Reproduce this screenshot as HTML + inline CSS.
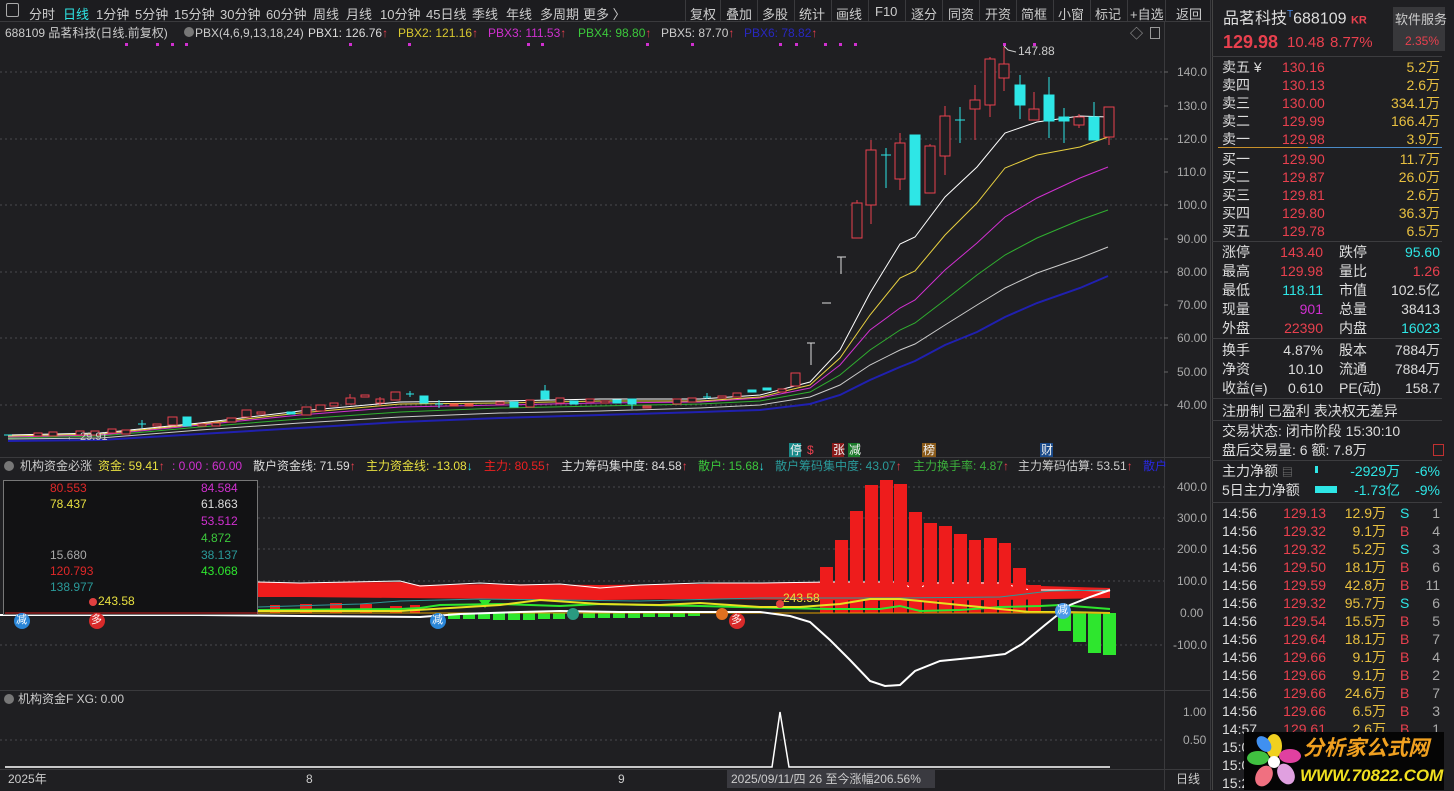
<!DOCTYPE html>
<html><head><meta charset="utf-8">
<style>
*{margin:0;padding:0;box-sizing:border-box}
body{width:1454px;height:790px;background:#1f1f22;overflow:hidden;position:relative;font-family:"Liberation Sans","Noto Sans CJK SC",sans-serif;font-size:12px;color:#ddd}
.a{position:absolute;white-space:nowrap;line-height:1}
.tb{position:absolute;top:0;left:0;width:1210px;height:22px;background:#1c1c1f;border-bottom:1px solid #3a3a3d}
.tb span{position:absolute;top:4px;font-size:13px;color:#ccc;white-space:nowrap}
.sep{position:absolute;top:0;width:1px;height:22px;background:#3a3a3d}
.r{color:#e8404e}.y{color:#e8c040}.c{color:#2ee6e6}.w{color:#ddd}.m{color:#d030d0}.g{color:#3cc83c}.gy{color:#aaa}
.rp{position:absolute;left:1212px;top:0;width:242px;height:790px;background:#1f1f22;border-left:1px solid #444}
.rp .a{font-size:14px}
.hl{position:absolute;left:1212px;width:230px;height:1px;background:#3c3c3f}
.rt{text-align:right}
</style></head><body>

<div class="tb">
<span style="left:6px;top:3px;width:13px;height:14px;border:1px solid #aaa;border-radius:2px"></span>
<span style="left:29px">分时</span><span style="left:63px;color:#2ee6e6">日线</span><span style="left:96px">1分钟</span><span style="left:135px">5分钟</span><span style="left:174px">15分钟</span><span style="left:220px">30分钟</span><span style="left:266px">60分钟</span><span style="left:313px">周线</span><span style="left:346px">月线</span><span style="left:380px">10分钟</span><span style="left:426px">45日线</span><span style="left:472px">季线</span><span style="left:506px">年线</span><span style="left:540px">多周期</span><span style="left:583px">更多 〉</span>
<div class="sep" style="left:685px"></div><span style="left:690px">复权</span>
<div class="sep" style="left:720px"></div><span style="left:726px">叠加</span>
<div class="sep" style="left:757px"></div><span style="left:762px">多股</span>
<div class="sep" style="left:794px"></div><span style="left:799px">统计</span>
<div class="sep" style="left:831px"></div><span style="left:836px">画线</span>
<div class="sep" style="left:868px"></div><span style="left:875px">F10</span>
<div class="sep" style="left:905px"></div><span style="left:911px">逐分</span>
<div class="sep" style="left:942px"></div><span style="left:948px">同资</span>
<div class="sep" style="left:979px"></div><span style="left:985px">开资</span>
<div class="sep" style="left:1016px"></div><span style="left:1021px">简框</span>
<div class="sep" style="left:1053px"></div><span style="left:1058px">小窗</span>
<div class="sep" style="left:1090px"></div><span style="left:1095px">标记</span>
<div class="sep" style="left:1127px"></div><span style="left:1130px">+自选</span>
<div class="sep" style="left:1165px"></div><span style="left:1176px">返回</span>
</div>

<svg style="position:absolute;left:0;top:0" width="1212" height="790">
<g stroke="#3a3a3d" stroke-width="1">
<line x1="1164.5" y1="22" x2="1164.5" y2="790"/>
<line x1="1210.5" y1="0" x2="1210.5" y2="790"/>
<line x1="0" y1="457.5" x2="1210" y2="457.5"/>
<line x1="0" y1="690.5" x2="1210" y2="690.5"/>
<line x1="0" y1="769.5" x2="1210" y2="769.5"/>
</g>
<g stroke="#4a4a4e" stroke-dasharray="2,3">
<line x1="0" y1="72" x2="1164" y2="72"/><line x1="0" y1="139" x2="1164" y2="139"/><line x1="0" y1="205" x2="1164" y2="205"/><line x1="0" y1="272" x2="1164" y2="272"/><line x1="0" y1="338" x2="1164" y2="338"/><line x1="0" y1="405" x2="1164" y2="405"/>
<line x1="258" y1="487" x2="1164" y2="487"/><line x1="258" y1="518" x2="1164" y2="518"/><line x1="258" y1="549" x2="1164" y2="549"/><line x1="258" y1="581" x2="1164" y2="581"/><line x1="0" y1="645" x2="1164" y2="645"/>
<line x1="0" y1="740" x2="1164" y2="740"/>
</g>
<g stroke="#666"><line x1="1164" y1="72" x2="1168" y2="72"/><line x1="1164" y1="106" x2="1168" y2="106"/><line x1="1164" y1="139" x2="1168" y2="139"/><line x1="1164" y1="172" x2="1168" y2="172"/><line x1="1164" y1="205" x2="1168" y2="205"/><line x1="1164" y1="239" x2="1168" y2="239"/><line x1="1164" y1="272" x2="1168" y2="272"/><line x1="1164" y1="305" x2="1168" y2="305"/><line x1="1164" y1="338" x2="1168" y2="338"/><line x1="1164" y1="372" x2="1168" y2="372"/><line x1="1164" y1="405" x2="1168" y2="405"/></g>
<!-- magenta dots -->
<g fill="#d030d0">
<rect x="125" y="43" width="3" height="3"/><rect x="156" y="43" width="3" height="3"/><rect x="171" y="43" width="3" height="3"/><rect x="185" y="43" width="3" height="3"/><rect x="349" y="43" width="3" height="3"/><rect x="408" y="43" width="3" height="3"/><rect x="527" y="43" width="3" height="3"/><rect x="541" y="43" width="3" height="3"/><rect x="646" y="43" width="3" height="3"/><rect x="691" y="43" width="3" height="3"/><rect x="779" y="43" width="3" height="3"/><rect x="795" y="43" width="3" height="3"/><rect x="824" y="43" width="3" height="3"/><rect x="839" y="43" width="3" height="3"/><rect x="854" y="43" width="3" height="3"/><rect x="1003" y="43" width="3" height="3"/><rect x="1033" y="43" width="3" height="3"/>
</g>
<!-- MA lines -->
<g fill="none" stroke-width="1">
<polyline stroke="#2020b0" stroke-width="2" points="8,441 100,440 200,434 300,428 400,422 500,418 600,415 700,412 760,410 810,404 840,395 870,380 900,367 915,361 945,345 977,332 1005,317 1037,303 1080,288 1108,276"/>
<polyline stroke="#cccccc" points="8,439 100,438 200,430 300,423 400,417 500,413 600,411 700,408 760,405 810,397 840,385 870,365 900,350 915,344 945,325 977,305 1005,288 1037,273 1080,258 1108,247"/>
<polyline stroke="#30b030" points="8,438 100,436 200,427 300,419 400,412 500,408 600,406 700,404 760,401 810,392 840,375 870,350 900,330 915,323 945,300 977,275 1005,255 1037,238 1080,220 1108,210"/>
<polyline stroke="#d030d0" points="8,437 100,435 200,425 300,415 400,407 500,405 600,403 700,402 760,398 810,388 840,365 870,330 900,308 915,300 945,270 977,243 1005,217 1037,198 1080,178 1108,167"/>
<polyline stroke="#e8d040" points="8,436 100,434 200,424 300,413 400,404 500,403 600,401 700,401 760,397 810,385 840,358 870,315 900,278 915,271 945,235 977,203 1005,168 1037,155 1080,147 1108,137"/>
<polyline stroke="#ffffff" points="8,435 100,433 200,423 300,411 400,402 500,401 600,399 700,399 760,395 810,382 840,350 870,293 900,244 915,237 945,197 977,167 1005,133 1037,122 1080,116 1108,117"/>
</g>
<!-- early candles -->
<g stroke="#e8404e" fill="#1f1f22">
<rect x="34" y="433" width="8" height="3"/><rect x="49" y="432" width="8" height="4"/><rect x="76" y="431" width="8" height="4"/><rect x="91" y="431" width="8" height="4"/><rect x="108" y="429" width="8" height="4"/><rect x="122" y="430" width="8" height="4"/><rect x="153" y="424" width="8" height="2"/><rect x="168" y="417" width="9" height="8"/><rect x="198" y="424" width="8" height="2"/><rect x="212" y="423" width="8" height="3"/><rect x="227" y="418" width="9" height="4"/><rect x="242" y="410" width="9" height="7"/><rect x="257" y="412" width="8" height="2"/><rect x="302" y="407" width="9" height="8"/><rect x="316" y="405" width="9" height="6"/><rect x="330" y="403" width="8" height="3"/><rect x="346" y="398" width="9" height="6"/><rect x="361" y="395" width="8" height="2"/><rect x="376" y="399" width="8" height="4"/><rect x="391" y="392" width="9" height="8"/><rect x="450" y="404" width="8" height="2" fill="#e86040"/><rect x="465" y="404" width="8" height="2" fill="#e86040"/><rect x="496" y="402" width="8" height="2"/><rect x="526" y="400" width="8" height="7"/><rect x="556" y="398" width="8" height="5"/><rect x="586" y="399" width="8" height="3"/><rect x="601" y="401" width="8" height="2"/><rect x="643" y="406" width="8" height="2" fill="#a04040"/><rect x="673" y="399" width="8" height="5"/><rect x="688" y="398" width="8" height="4"/><rect x="718" y="396" width="8" height="2"/><rect x="733" y="393" width="8" height="4"/><rect x="778" y="389" width="8" height="3"/><rect x="791" y="373" width="9" height="13"/>
<line x1="350" y1="394" x2="350" y2="398"/><line x1="380" y1="397" x2="380" y2="406"/>
</g>
<g fill="#2ee6e6" stroke="#2ee6e6">
<line x1="4" y1="435" x2="12" y2="435"/><line x1="138" y1="424" x2="146" y2="424"/><line x1="142" y1="420" x2="142" y2="428"/><rect x="183" y="417" width="8" height="9"/><rect x="287" y="412" width="8" height="2"/><line x1="406" y1="394" x2="414" y2="394"/><line x1="410" y1="391" x2="410" y2="397"/><rect x="420" y="396" width="8" height="7"/><line x1="435" y1="404" x2="443" y2="404"/><line x1="439" y1="400" x2="439" y2="408"/><rect x="510" y="402" width="8" height="5"/><rect x="541" y="391" width="8" height="8"/><line x1="545" y1="385" x2="545" y2="391"/><rect x="570" y="401" width="8" height="3"/><rect x="613" y="400" width="8" height="3"/><rect x="628" y="399" width="8" height="5"/><line x1="632" y1="404" x2="632" y2="409"/><line x1="703" y1="397" x2="711" y2="397"/><line x1="707" y1="393" x2="707" y2="399"/><rect x="748" y="390" width="8" height="2"/><rect x="763" y="388" width="8" height="2"/>
</g>
<!-- T marks -->
<g stroke="#ddd"><line x1="807" y1="343" x2="815" y2="343"/><line x1="811" y1="343" x2="811" y2="365"/><line x1="822" y1="303" x2="831" y2="303"/><line x1="837" y1="257" x2="846" y2="257"/><line x1="841" y1="257" x2="841" y2="274"/></g>
<!-- upper candles red hollow -->
<g stroke="#e8404e" fill="#1f1f22">
<line x1="857" y1="200" x2="857" y2="203"/><rect x="852" y="203" width="10" height="35"/>
<line x1="871" y1="140" x2="871" y2="224"/><rect x="866" y="150" width="10" height="55"/>
<line x1="900" y1="133" x2="900" y2="190"/><rect x="895" y="143" width="10" height="36"/>
<line x1="930" y1="144" x2="930" y2="146"/><rect x="925" y="146" width="10" height="47"/>
<line x1="945" y1="106" x2="945" y2="175"/><rect x="940" y="116" width="10" height="40"/>
<line x1="975" y1="85" x2="975" y2="140"/><rect x="970" y="100" width="10" height="9"/>
<line x1="990" y1="57" x2="990" y2="117"/><rect x="985" y="59" width="10" height="46"/>
<line x1="1004" y1="47" x2="1004" y2="91"/><rect x="999" y="64" width="10" height="14"/>
<line x1="1034" y1="92" x2="1034" y2="120"/><rect x="1029" y="109" width="10" height="11"/>
<line x1="1079" y1="114" x2="1079" y2="128"/><rect x="1074" y="117" width="10" height="8"/>
<line x1="1109" y1="137" x2="1109" y2="145"/><rect x="1104" y="107" width="10" height="30"/>
</g>
<g fill="#2ee6e6" stroke="#2ee6e6">
<line x1="886" y1="148" x2="886" y2="188"/><line x1="881" y1="155" x2="891" y2="155"/>
<rect x="910" y="135" width="10" height="70"/>
<line x1="960" y1="107" x2="960" y2="143"/><line x1="955" y1="120" x2="965" y2="120"/>
<line x1="1020" y1="75" x2="1020" y2="119"/><rect x="1015" y="85" width="10" height="20"/>
<line x1="1049" y1="77" x2="1049" y2="138"/><rect x="1044" y="95" width="10" height="26"/>
<line x1="1064" y1="108" x2="1064" y2="143"/><rect x="1059" y="117" width="10" height="4"/>
<line x1="1094" y1="102" x2="1094" y2="140"/><rect x="1089" y="117" width="10" height="23"/>
</g>
<polyline points="1004,46 1008,50 1016,52" fill="none" stroke="#ccc"/>
<!-- marker tags -->
<rect x="789" y="443" width="12" height="14" fill="#1a8a8a"/><rect x="832" y="443" width="12" height="14" fill="#8a1a1a"/><rect x="848" y="443" width="12" height="14" fill="#1a7a2a"/><rect x="922" y="443" width="14" height="14" fill="#8a5a1a"/><rect x="1040" y="443" width="13" height="14" fill="#1a4a8a"/>

<!-- indicator panel -->
<polygon fill="#ee1c1c" points="258,582 300,583 400,582 420,585 500,584 600,585 700,584 740,583 800,582 900,582 1000,582 1040,586 1110,588 1110,598 1000,600 900,601 800,600 700,599 600,600 500,599 400,598 300,597 258,597"/>
<polyline fill="none" stroke="#fff" points="258,582 300,583 400,581 420,586 480,583 520,585 560,584 600,588 640,585 700,583 760,583 830,582 900,582 915,590 930,583 1000,583 1030,590 1060,590 1110,591"/>
<g fill="#ee1c1c">
<rect x="270" y="605" width="10" height="8"/><rect x="300" y="604" width="12" height="9"/><rect x="330" y="603" width="12" height="10"/><rect x="360" y="604" width="12" height="9"/><rect x="390" y="606" width="12" height="7"/><rect x="410" y="605" width="10" height="8"/>
<rect x="820" y="567" width="13" height="46"/><rect x="835" y="540" width="13" height="73"/><rect x="850" y="511" width="13" height="102"/><rect x="865" y="485" width="13" height="128"/><rect x="880" y="480" width="13" height="133"/><rect x="894" y="484" width="13" height="129"/><rect x="909" y="512" width="13" height="101"/><rect x="924" y="523" width="13" height="90"/><rect x="939" y="526" width="13" height="87"/><rect x="954" y="534" width="13" height="79"/><rect x="969" y="540" width="12" height="73"/><rect x="984" y="538" width="13" height="75"/><rect x="999" y="543" width="12" height="70"/><rect x="1013" y="568" width="13" height="45"/><rect x="1028" y="585" width="13" height="28"/>
</g>
<g fill="#2ee62e">
<rect x="448" y="613" width="12" height="6"/><rect x="463" y="613" width="12" height="6"/><rect x="478" y="613" width="12" height="6"/><rect x="493" y="613" width="12" height="7"/><rect x="508" y="613" width="12" height="7"/><rect x="523" y="613" width="12" height="7"/><rect x="538" y="613" width="12" height="6"/><rect x="553" y="613" width="12" height="6"/><rect x="583" y="613" width="12" height="5"/><rect x="598" y="613" width="12" height="5"/><rect x="613" y="613" width="12" height="5"/><rect x="628" y="613" width="12" height="5"/><rect x="643" y="613" width="12" height="4"/><rect x="658" y="613" width="12" height="4"/><rect x="673" y="613" width="12" height="4"/><rect x="688" y="613" width="12" height="3"/>
<rect x="1058" y="613" width="13" height="18"/><rect x="1073" y="613" width="13" height="29"/><rect x="1088" y="613" width="13" height="40"/><rect x="1103" y="613" width="13" height="42"/>
<polygon points="479,600 491,600 485,608"/>
</g>
<polyline fill="none" stroke="#2a9a9a" points="258,607 360,604 400,601 480,599 560,600 640,601 760,598 900,598 1000,597 1050,591 1110,590"/>
<polyline fill="none" stroke="#2ee62e" stroke-width="2" points="258,610 400,609 420,608 440,605 500,604 560,606 600,604 700,606 780,608 830,609 880,609 900,606 920,611 960,610 1000,607 1040,606 1060,605 1110,609"/>
<polyline fill="none" stroke="#e8e020" stroke-width="2" points="258,611 400,611 500,605 540,600 600,604 660,605 700,603 760,607 800,607 840,604 870,599 900,599 940,603 980,607 1030,612 1060,612 1110,613"/>
<line x1="258" y1="613" x2="1110" y2="613" stroke="#e0a000"/>
<polyline fill="none" stroke="#fff" stroke-width="2" points="0,615 200,615 300,616 420,617 460,614 520,612 560,611 620,612 700,612 760,612 790,616 810,622 830,640 850,660 870,681 885,686 900,685 915,671 940,661 960,659 980,657 1005,654 1022,644 1045,625 1070,605 1090,597 1110,590"/>
<!-- box -->
<rect x="3.5" y="480.5" width="254" height="134" fill="#121214" stroke="#777"/>
<line x1="5" y1="613" x2="258" y2="613" stroke="#cc2020"/>
<g>
<circle cx="22" cy="621" r="8" fill="#2a86d8"/><circle cx="97" cy="621" r="8" fill="#d82a2a"/><circle cx="438" cy="621" r="8" fill="#2a86d8"/><circle cx="573" cy="614" r="6" fill="#2a9a80"/><circle cx="722" cy="614" r="6" fill="#e07020"/><circle cx="737" cy="621" r="8" fill="#d82a2a"/><circle cx="1063" cy="611" r="8" fill="#4a9ae8"/>
<circle cx="93" cy="602" r="4" fill="#e04040"/><circle cx="780" cy="604" r="4" fill="#e04040"/>
</g>
<!-- third panel -->
<polyline fill="none" stroke="#fff" stroke-width="1.5" points="5,767 772,767 780,712 789,767 1110,767"/>
</svg>

<!-- chart texts -->
<div class="a" style="left:5px;top:27px;color:#ccc">688109 品茗科技(日线.前复权)</div>
<div class="a" style="left:184px;top:27px;width:10px;height:10px;border-radius:5px;background:#777"></div>
<div class="a" style="left:195px;top:27px;color:#ccc">PBX(4,6,9,13,18,24)</div>
<div class="a w" style="left:308px;top:27px">PBX1: 126.76<span class="r">↑</span></div>
<div class="a" style="left:398px;top:27px;color:#d8c830">PBX2: 121.16<span class="r">↑</span></div>
<div class="a m" style="left:488px;top:27px">PBX3: 111.53<span class="r">↑</span></div>
<div class="a g" style="left:578px;top:27px">PBX4: 98.80<span class="r">↑</span></div>
<div class="a" style="left:661px;top:27px;color:#ccc">PBX5: 87.70<span class="r">↑</span></div>
<div class="a" style="left:744px;top:27px;color:#2828c0">PBX6: 78.82<span class="r">↑</span></div>
<div class="a gy" style="left:1130px;top:27px;font-size:13px">◇</div>
<div class="a" style="left:1150px;top:27px;width:10px;height:12px;border:1px solid #999"></div>
<div class="a" style="left:1018px;top:45px;color:#ccc">147.88</div>
<div class="a" style="left:66px;top:432px;color:#ccc;font-size:11px">← 29.91</div>
<div class="a" style="left:790px;top:444px;color:#eee">停</div><div class="a r" style="left:807px;top:444px">$</div><div class="a" style="left:833px;top:444px;color:#eee">张</div><div class="a" style="left:849px;top:444px;color:#eee">减</div><div class="a" style="left:923px;top:444px;color:#eee">榜</div><div class="a" style="left:1041px;top:444px;color:#eee">财</div>
<div class="a gy" style="left:1177px;top:66px">140.0</div><div class="a gy" style="left:1177px;top:100px">130.0</div><div class="a gy" style="left:1177px;top:133px">120.0</div><div class="a gy" style="left:1177px;top:166px">110.0</div><div class="a gy" style="left:1177px;top:199px">100.0</div><div class="a gy" style="left:1177px;top:233px">90.00</div><div class="a gy" style="left:1177px;top:266px">80.00</div><div class="a gy" style="left:1177px;top:299px">70.00</div><div class="a gy" style="left:1177px;top:332px">60.00</div><div class="a gy" style="left:1177px;top:366px">50.00</div><div class="a gy" style="left:1177px;top:399px">40.00</div>

<div class="a" style="left:4px;top:461px;width:10px;height:10px;border-radius:5px;background:#777"></div>
<div class="a" style="left:20px;top:460px;color:#ccc">机构资金必涨</div>
<div class="a" style="left:98px;top:460px;color:#e8e040">资金: 59.41<span class="r">↑</span></div>
<div class="a m" style="left:172px;top:460px">: 0.00 : 60.00</div>
<div class="a w" style="left:253px;top:460px">散户资金线: 71.59<span class="r">↑</span></div>
<div class="a" style="left:366px;top:460px;color:#e8e040">主力资金线: -13.08<span class="c">↓</span></div>
<div class="a" style="left:484px;top:460px;color:#ee2020">主力: 80.55<span class="r">↑</span></div>
<div class="a w" style="left:561px;top:460px">主力筹码集中度: 84.58<span class="r">↑</span></div>
<div class="a g" style="left:698px;top:460px">散户: 15.68<span class="c">↓</span></div>
<div class="a" style="left:775px;top:460px;color:#2a9a9a">散户筹码集中度: 43.07<span class="r">↑</span></div>
<div class="a" style="left:913px;top:460px;color:#3cb03c">主力换手率: 4.87<span class="r">↑</span></div>
<div class="a" style="left:1018px;top:460px;color:#ccc">主力筹码估算: 53.51<span class="r">↑</span></div>
<div class="a" style="left:1143px;top:460px;color:#2828e0">散户</div>
<div class="a" style="left:50px;top:482px;color:#e02828">80.553</div><div class="a" style="left:50px;top:498px;color:#e8e040">78.437</div><div class="a gy" style="left:50px;top:549px">15.680</div><div class="a" style="left:50px;top:565px;color:#e02828">120.793</div><div class="a" style="left:50px;top:581px;color:#2a9a9a">138.977</div>
<div class="a m" style="left:201px;top:482px">84.584</div><div class="a w" style="left:201px;top:498px">61.863</div><div class="a m" style="left:201px;top:515px">53.512</div><div class="a g" style="left:201px;top:532px">4.872</div><div class="a" style="left:201px;top:549px;color:#2a9a9a">38.137</div><div class="a" style="left:201px;top:565px;color:#2ee62e">43.068</div>
<div class="a" style="left:98px;top:595px;color:#e8e040">243.58</div>
<div class="a" style="left:783px;top:592px;color:#e8e040">243.58</div>
<div class="a" style="left:16px;top:615px;color:#fff;font-size:11px">减</div><div class="a" style="left:91px;top:615px;color:#fff;font-size:11px">多</div><div class="a" style="left:432px;top:615px;color:#fff;font-size:11px">减</div><div class="a" style="left:731px;top:615px;color:#fff;font-size:11px">多</div><div class="a" style="left:1057px;top:605px;color:#fff;font-size:11px">减</div>
<div class="a gy" style="left:1177px;top:481px">400.0</div><div class="a gy" style="left:1177px;top:512px">300.0</div><div class="a gy" style="left:1177px;top:543px">200.0</div><div class="a gy" style="left:1177px;top:575px">100.0</div><div class="a gy" style="left:1180px;top:607px">0.00</div><div class="a gy" style="left:1173px;top:639px">-100.0</div>

<div class="a" style="left:4px;top:694px;width:10px;height:10px;border-radius:5px;background:#777"></div>
<div class="a" style="left:18px;top:693px;color:#ccc">机构资金F XG: 0.00</div>
<div class="a gy" style="left:1183px;top:706px">1.00</div><div class="a gy" style="left:1183px;top:734px">0.50</div>
<div class="a" style="left:8px;top:773px;color:#ccc">2025年</div>
<div class="a" style="left:306px;top:773px;color:#ccc">8</div>
<div class="a" style="left:618px;top:773px;color:#ccc">9</div>
<div class="a" style="left:727px;top:770px;width:208px;height:18px;background:#3a3a40"></div>
<div class="a" style="left:731px;top:773px;color:#ccc">2025/09/11/四 26 至今涨幅206.56%</div>
<div class="a" style="left:1176px;top:773px;color:#ccc">日线</div>

<!-- right panel -->
<div class="rp">
<div class="a" style="left:10px;top:10px;font-size:16px;color:#ddd">品茗科技<sup style="color:#4a8ae8;font-size:10px">T</sup>688109 <b style="color:#e8404e;font-size:11px">KR</b></div>
<div class="a" style="left:180px;top:7px;width:52px;height:44px;background:#38383b"></div>
<div class="a" style="left:182px;top:13px;font-size:13px;color:#ccc">软件服务</div>
<div class="a r" style="left:192px;top:35px;font-size:12px">2.35%</div>
<div class="a r" style="left:10px;top:33px;font-size:18px;font-weight:bold">129.98</div>
<div class="a r" style="left:74px;top:35px;font-size:15px">10.48</div>
<div class="a r" style="left:117px;top:35px;font-size:15px">8.77%</div>
</div>
<div class="hl" style="top:56px"></div>
<div style="position:absolute;left:1218px;top:147px;width:90px;height:1px;background:#c8902a"></div>
<div style="position:absolute;left:1308px;top:147px;width:134px;height:1px;background:#4a8ac8"></div>
<div class="hl" style="top:241px"></div><div class="hl" style="top:338px"></div><div class="hl" style="top:398px"></div><div class="hl" style="top:420px"></div><div class="hl" style="top:460px"></div><div class="hl" style="top:502px"></div>

<div style="position:absolute;left:0;top:0;font-size:14px">
<div class="a w" style="left:1222px;top:60px">卖五 ¥</div><div class="a r" style="left:1282px;top:60px">130.16</div><div class="a y rt" style="left:1360px;width:80px;top:60px">5.2万</div>
<div class="a w" style="left:1222px;top:78px">卖四</div><div class="a r" style="left:1282px;top:78px">130.13</div><div class="a y rt" style="left:1360px;width:80px;top:78px">2.6万</div>
<div class="a w" style="left:1222px;top:96px">卖三</div><div class="a r" style="left:1282px;top:96px">130.00</div><div class="a y rt" style="left:1360px;width:80px;top:96px">334.1万</div>
<div class="a w" style="left:1222px;top:114px">卖二</div><div class="a r" style="left:1282px;top:114px">129.99</div><div class="a y rt" style="left:1360px;width:80px;top:114px">166.4万</div>
<div class="a w" style="left:1222px;top:132px">卖一</div><div class="a r" style="left:1282px;top:132px">129.98</div><div class="a y rt" style="left:1360px;width:80px;top:132px">3.9万</div>
<div class="a w" style="left:1222px;top:152px">买一</div><div class="a r" style="left:1282px;top:152px">129.90</div><div class="a y rt" style="left:1360px;width:80px;top:152px">11.7万</div>
<div class="a w" style="left:1222px;top:170px">买二</div><div class="a r" style="left:1282px;top:170px">129.87</div><div class="a y rt" style="left:1360px;width:80px;top:170px">26.0万</div>
<div class="a w" style="left:1222px;top:188px">买三</div><div class="a r" style="left:1282px;top:188px">129.81</div><div class="a y rt" style="left:1360px;width:80px;top:188px">2.6万</div>
<div class="a w" style="left:1222px;top:206px">买四</div><div class="a r" style="left:1282px;top:206px">129.80</div><div class="a y rt" style="left:1360px;width:80px;top:206px">36.3万</div>
<div class="a w" style="left:1222px;top:224px">买五</div><div class="a r" style="left:1282px;top:224px">129.78</div><div class="a y rt" style="left:1360px;width:80px;top:224px">6.5万</div>

<div class="a w" style="left:1222px;top:245px">涨停</div><div class="a r rt" style="left:1253px;width:70px;top:245px">143.40</div><div class="a w" style="left:1339px;top:245px">跌停</div><div class="a c rt" style="left:1370px;width:70px;top:245px">95.60</div>
<div class="a w" style="left:1222px;top:264px">最高</div><div class="a r rt" style="left:1253px;width:70px;top:264px">129.98</div><div class="a w" style="left:1339px;top:264px">量比</div><div class="a r rt" style="left:1370px;width:70px;top:264px">1.26</div>
<div class="a w" style="left:1222px;top:283px">最低</div><div class="a c rt" style="left:1253px;width:70px;top:283px">118.11</div><div class="a w" style="left:1339px;top:283px">市值</div><div class="a w rt" style="left:1370px;width:70px;top:283px">102.5亿</div>
<div class="a w" style="left:1222px;top:302px">现量</div><div class="a m rt" style="left:1253px;width:70px;top:302px">901</div><div class="a w" style="left:1339px;top:302px">总量</div><div class="a w rt" style="left:1370px;width:70px;top:302px">38413</div>
<div class="a w" style="left:1222px;top:321px">外盘</div><div class="a r rt" style="left:1253px;width:70px;top:321px">22390</div><div class="a w" style="left:1339px;top:321px">内盘</div><div class="a c rt" style="left:1370px;width:70px;top:321px">16023</div>
<div class="a w" style="left:1222px;top:343px">换手</div><div class="a w rt" style="left:1253px;width:70px;top:343px">4.87%</div><div class="a w" style="left:1339px;top:343px">股本</div><div class="a w rt" style="left:1370px;width:70px;top:343px">7884万</div>
<div class="a w" style="left:1222px;top:362px">净资</div><div class="a w rt" style="left:1253px;width:70px;top:362px">10.10</div><div class="a w" style="left:1339px;top:362px">流通</div><div class="a w rt" style="left:1370px;width:70px;top:362px">7884万</div>
<div class="a w" style="left:1222px;top:381px">收益(≡)</div><div class="a w rt" style="left:1253px;width:70px;top:381px">0.610</div><div class="a w" style="left:1339px;top:381px">PE(动)</div><div class="a w rt" style="left:1370px;width:70px;top:381px">158.7</div>

<div class="a w" style="left:1222px;top:404px">注册制 已盈利 表决权无差异</div>
<div class="a w" style="left:1222px;top:424px">交易状态: 闭市阶段 15:30:10</div>
<div class="a w" style="left:1222px;top:443px">盘后交易量: 6  额: 7.8万</div>
<div class="a" style="left:1433px;top:444px;width:11px;height:12px;border:1px solid #c03030"></div>
<div class="a w" style="left:1222px;top:464px">主力净额 <span style="font-size:11px;color:#888">▤</span></div><div style="position:absolute;left:1315px;top:466px;width:3px;height:7px;background:#2ee6e6"></div><div class="a c rt" style="left:1320px;width:80px;top:464px">-2929万</div><div class="a c rt" style="left:1400px;width:40px;top:464px">-6%</div>
<div class="a w" style="left:1222px;top:483px">5日主力净额</div><div style="position:absolute;left:1315px;top:486px;width:22px;height:7px;background:#2ee6e6"></div><div class="a c rt" style="left:1320px;width:80px;top:483px">-1.73亿</div><div class="a c rt" style="left:1400px;width:40px;top:483px">-9%</div>

<div class="a w" style="left:1222px;top:506px">14:56</div><div class="a r rt" style="left:1266px;width:60px;top:506px">129.13</div><div class="a y rt" style="left:1326px;width:60px;top:506px">12.9万</div><div class="a c" style="left:1400px;top:506px">S</div><div class="a gy rt" style="left:1410px;width:30px;top:506px">1</div>
<div class="a w" style="left:1222px;top:524px">14:56</div><div class="a r rt" style="left:1266px;width:60px;top:524px">129.32</div><div class="a y rt" style="left:1326px;width:60px;top:524px">9.1万</div><div class="a r" style="left:1400px;top:524px">B</div><div class="a gy rt" style="left:1410px;width:30px;top:524px">4</div>
<div class="a w" style="left:1222px;top:542px">14:56</div><div class="a r rt" style="left:1266px;width:60px;top:542px">129.32</div><div class="a y rt" style="left:1326px;width:60px;top:542px">5.2万</div><div class="a c" style="left:1400px;top:542px">S</div><div class="a gy rt" style="left:1410px;width:30px;top:542px">3</div>
<div class="a w" style="left:1222px;top:560px">14:56</div><div class="a r rt" style="left:1266px;width:60px;top:560px">129.50</div><div class="a y rt" style="left:1326px;width:60px;top:560px">18.1万</div><div class="a r" style="left:1400px;top:560px">B</div><div class="a gy rt" style="left:1410px;width:30px;top:560px">6</div>
<div class="a w" style="left:1222px;top:578px">14:56</div><div class="a r rt" style="left:1266px;width:60px;top:578px">129.59</div><div class="a y rt" style="left:1326px;width:60px;top:578px">42.8万</div><div class="a r" style="left:1400px;top:578px">B</div><div class="a gy rt" style="left:1410px;width:30px;top:578px">11</div>
<div class="a w" style="left:1222px;top:596px">14:56</div><div class="a r rt" style="left:1266px;width:60px;top:596px">129.32</div><div class="a y rt" style="left:1326px;width:60px;top:596px">95.7万</div><div class="a c" style="left:1400px;top:596px">S</div><div class="a gy rt" style="left:1410px;width:30px;top:596px">6</div>
<div class="a w" style="left:1222px;top:614px">14:56</div><div class="a r rt" style="left:1266px;width:60px;top:614px">129.54</div><div class="a y rt" style="left:1326px;width:60px;top:614px">15.5万</div><div class="a r" style="left:1400px;top:614px">B</div><div class="a gy rt" style="left:1410px;width:30px;top:614px">5</div>
<div class="a w" style="left:1222px;top:632px">14:56</div><div class="a r rt" style="left:1266px;width:60px;top:632px">129.64</div><div class="a y rt" style="left:1326px;width:60px;top:632px">18.1万</div><div class="a r" style="left:1400px;top:632px">B</div><div class="a gy rt" style="left:1410px;width:30px;top:632px">7</div>
<div class="a w" style="left:1222px;top:650px">14:56</div><div class="a r rt" style="left:1266px;width:60px;top:650px">129.66</div><div class="a y rt" style="left:1326px;width:60px;top:650px">9.1万</div><div class="a r" style="left:1400px;top:650px">B</div><div class="a gy rt" style="left:1410px;width:30px;top:650px">4</div>
<div class="a w" style="left:1222px;top:668px">14:56</div><div class="a r rt" style="left:1266px;width:60px;top:668px">129.66</div><div class="a y rt" style="left:1326px;width:60px;top:668px">9.1万</div><div class="a r" style="left:1400px;top:668px">B</div><div class="a gy rt" style="left:1410px;width:30px;top:668px">2</div>
<div class="a w" style="left:1222px;top:686px">14:56</div><div class="a r rt" style="left:1266px;width:60px;top:686px">129.66</div><div class="a y rt" style="left:1326px;width:60px;top:686px">24.6万</div><div class="a r" style="left:1400px;top:686px">B</div><div class="a gy rt" style="left:1410px;width:30px;top:686px">7</div>
<div class="a w" style="left:1222px;top:704px">14:56</div><div class="a r rt" style="left:1266px;width:60px;top:704px">129.66</div><div class="a y rt" style="left:1326px;width:60px;top:704px">6.5万</div><div class="a r" style="left:1400px;top:704px">B</div><div class="a gy rt" style="left:1410px;width:30px;top:704px">3</div>
<div class="a w" style="left:1222px;top:722px">14:57</div><div class="a r rt" style="left:1266px;width:60px;top:722px">129.61</div><div class="a y rt" style="left:1326px;width:60px;top:722px">2.6万</div><div class="a r" style="left:1400px;top:722px">B</div><div class="a gy rt" style="left:1410px;width:30px;top:722px">1</div>
<div class="a w" style="left:1222px;top:740px">15:00</div><div class="a w" style="left:1222px;top:758px">15:00</div><div class="a w" style="left:1222px;top:776px">15:25</div>
</div>

<!-- logo -->
<div style="position:absolute;left:1244px;top:732px;width:200px;height:58px;background:#050505"></div>
<svg style="position:absolute;left:1244px;top:732px" width="60" height="58">
<ellipse cx="30" cy="14" rx="8" ry="12" fill="#f0d020"/>
<ellipse cx="46" cy="24" rx="11" ry="7" fill="#e040a0"/>
<ellipse cx="42" cy="42" rx="8" ry="11" fill="#e0a0e0" transform="rotate(-30 42 42)"/>
<ellipse cx="20" cy="44" rx="8" ry="11" fill="#f07080" transform="rotate(30 20 44)"/>
<ellipse cx="14" cy="26" rx="11" ry="7" fill="#40c040"/>
<ellipse cx="20" cy="12" rx="6" ry="9" fill="#4090f0" transform="rotate(-40 20 12)"/>
<circle cx="30" cy="30" r="6" fill="#fff"/>
</svg>
<div class="a" style="left:1303px;top:738px;font-size:21px;font-weight:bold;font-style:italic;color:#f0a020">分析家公式网</div>
<div class="a" style="left:1300px;top:767px;font-size:17px;font-weight:bold;font-style:italic;color:#f0e020">WWW.70822.COM</div>
</body></html>
